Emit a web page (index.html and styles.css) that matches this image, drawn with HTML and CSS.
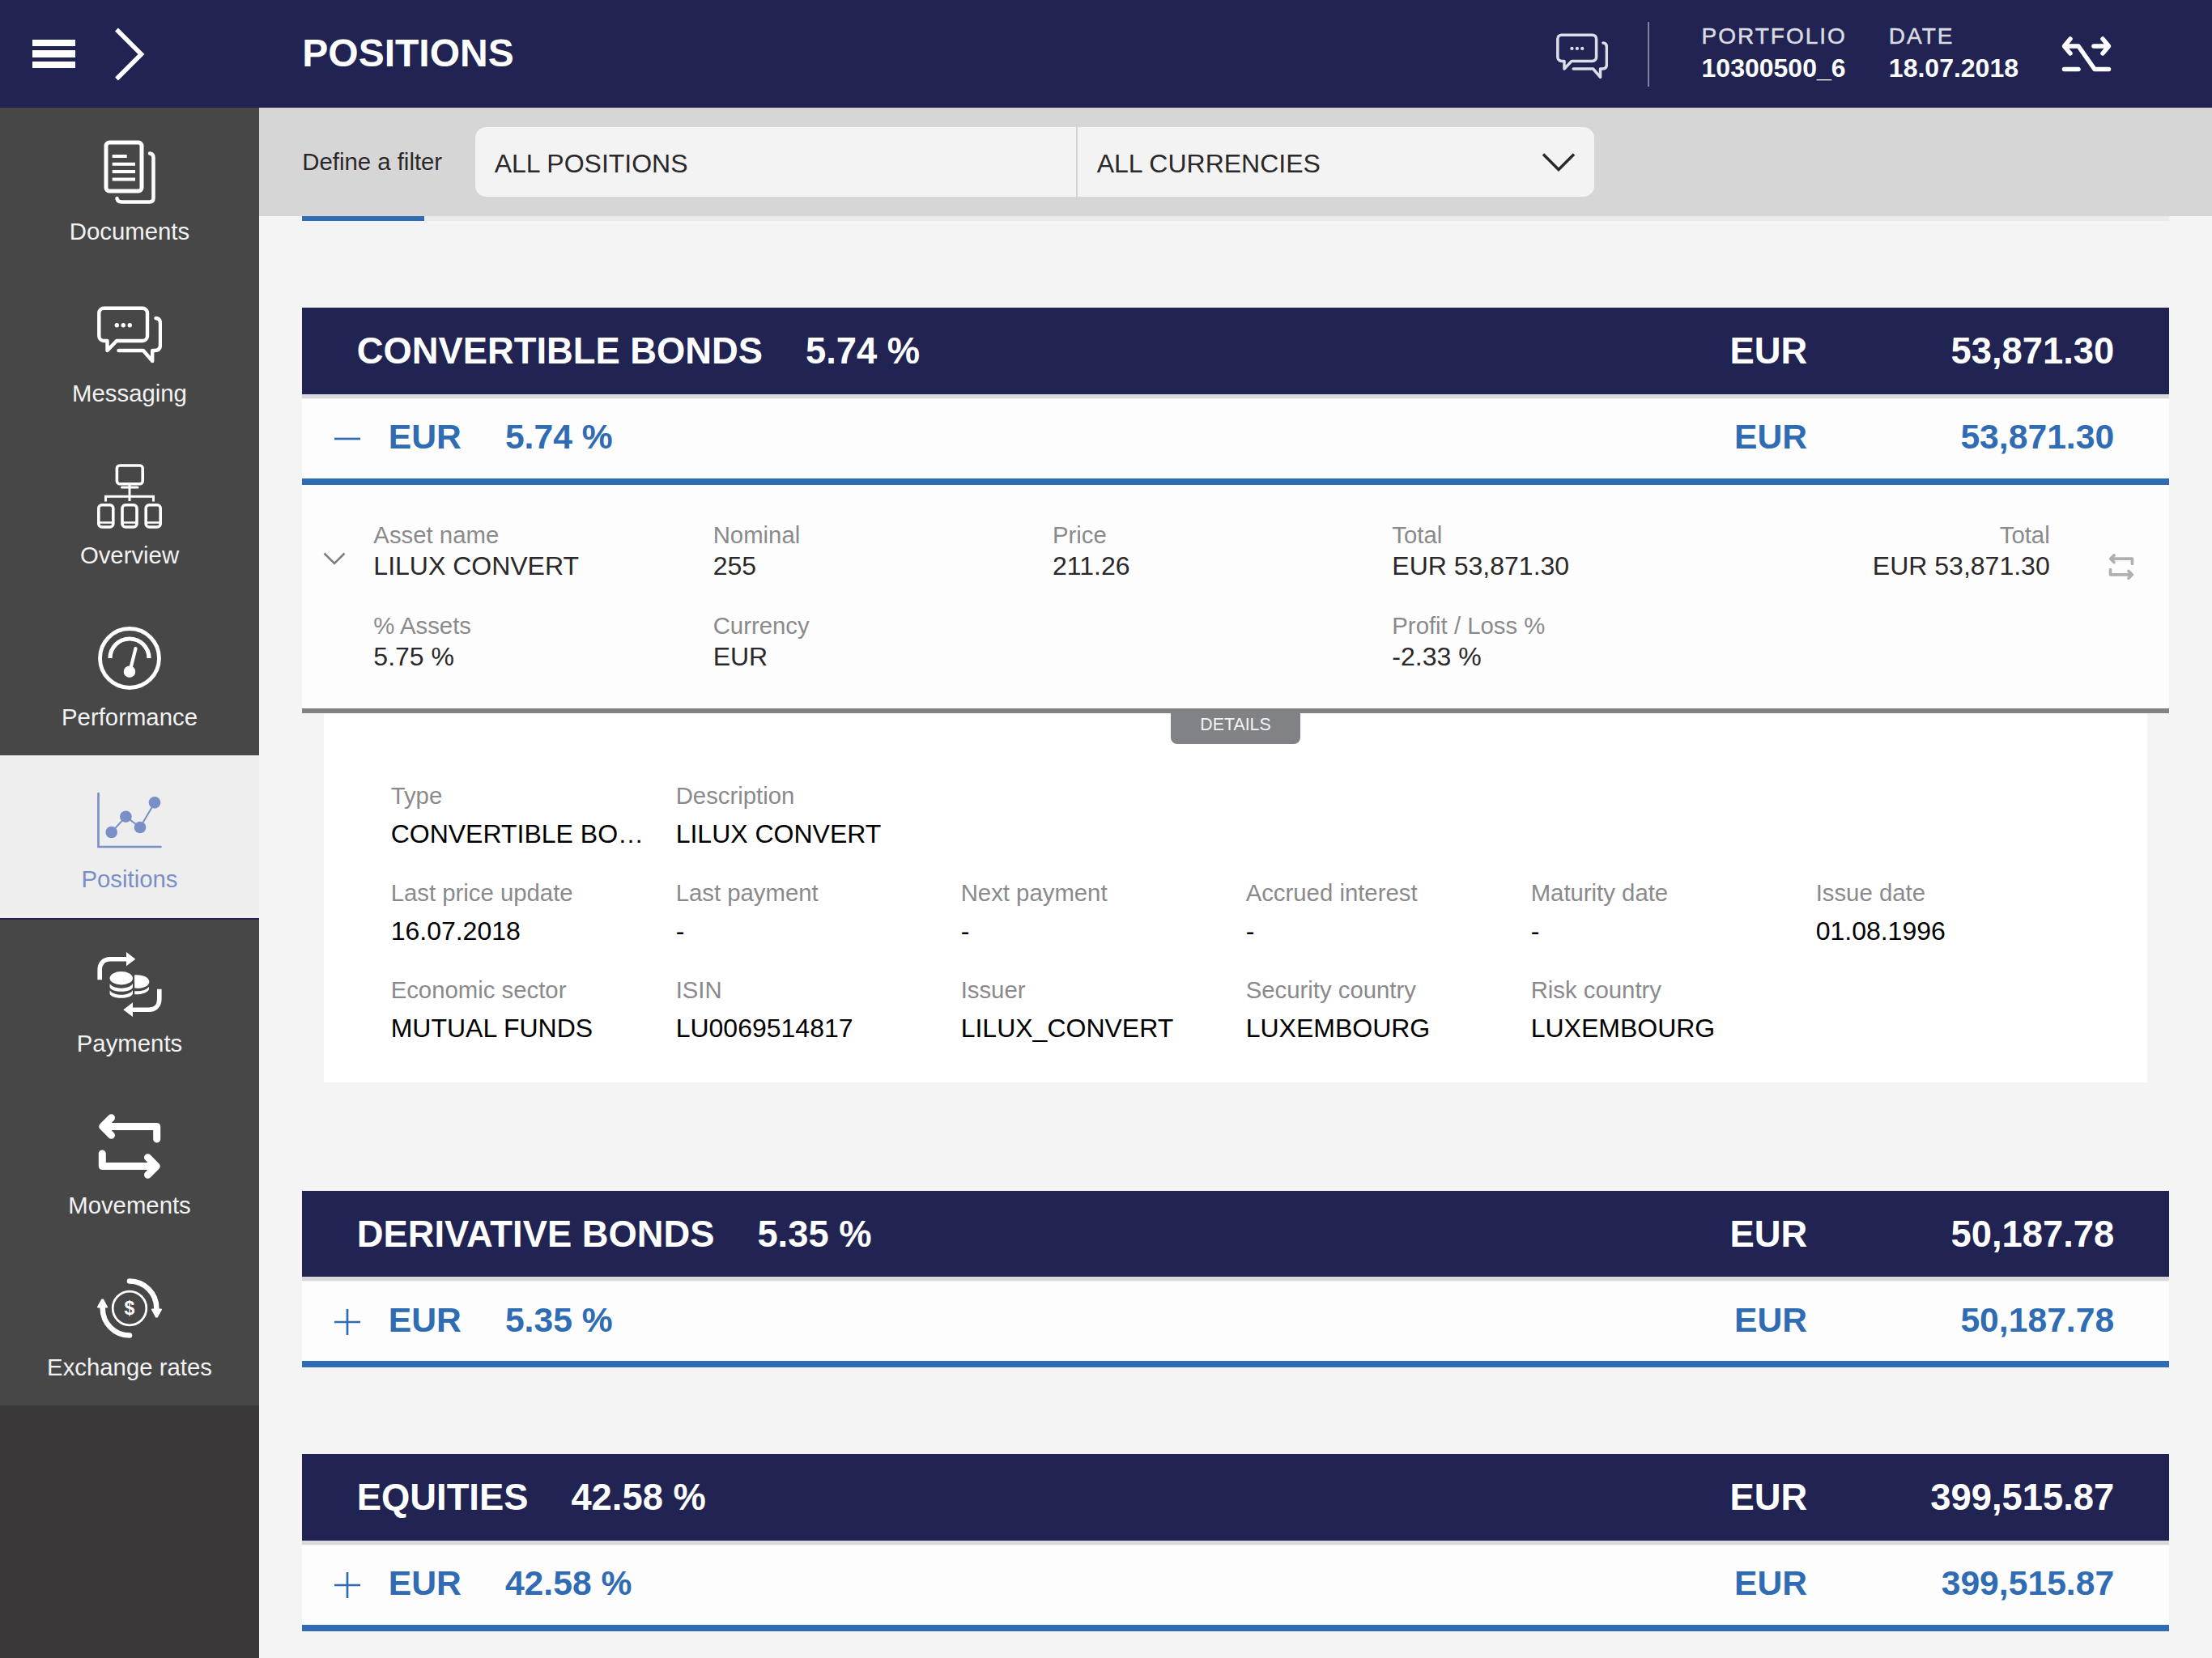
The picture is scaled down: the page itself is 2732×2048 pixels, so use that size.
FILE: index.html
```html
<!DOCTYPE html>
<html lang="en">
<head>
    <meta charset="UTF-8">
    <meta name="viewport" content="width=device-width, initial-scale=1.0">
    <title>Positions</title>
    <link rel="stylesheet" href="styles.css">
</head>
<body>
    <!-- shared icons -->
    <svg class="icon-defs" width="0" height="0">
        <symbol id="icon-chat" viewBox="0 0 80 80">
            <g fill="none" stroke="currentColor" stroke-width="4.4" stroke-linecap="round" stroke-linejoin="round">
                <path d="M8.3 7.7H56a6 6 0 0 1 6 6V42a6 6 0 0 1-6 6H24L12.5 60V48H8.3a6 6 0 0 1-6-6V13.7a6 6 0 0 1 6-6z"/>
                <path d="M72.5 20q5.5.5 5.5 6.5V53q0 7-7 7H68.2V73L57 60H26.5"/>
            </g>
            <g fill="currentColor">
                <circle cx="24.3" cy="28.7" r="2.7"/>
                <circle cx="32.3" cy="28.7" r="2.7"/>
                <circle cx="40.3" cy="28.7" r="2.7"/>
            </g>
        </symbol>
        <symbol id="icon-movements" viewBox="0 0 80 80">
            <g fill="none" stroke="currentColor" stroke-width="9" stroke-linecap="round" stroke-linejoin="round">
                <path d="M17.5 4.7L6.7 15.4L17.5 26.3M8 15.4H73.7V31"/>
                <path d="M62.5 75.3L73.3 64.6L62.5 53.7M72 64.6H6.3V49"/>
            </g>
            <path fill="currentColor" d="M6.7 15.4L17.5 4.7V26.3zM73.3 64.6L62.5 75.3V53.7z"/>
        </symbol>
    </svg>

    <header class="header">
        <div class="header-nav">
            <div class="burger"><span></span><span></span><span></span></div>
            <svg class="forward" viewBox="0 0 40 66" fill="none" stroke="currentColor" stroke-width="5.5"><path d="M3 2.5L33.5 33L3 63.5"/></svg>
        </div>
        <h1>POSITIONS</h1>
        <div class="header-info">
            <svg class="header-chat"><use href="#icon-chat"/></svg>
            <div class="header-divider"></div>
            <div class="info-item">
                <div class="info-label">PORTFOLIO</div>
                <div class="info-value">10300500_6</div>
            </div>
            <div class="info-item">
                <div class="info-label">DATE</div>
                <div class="info-value">18.07.2018</div>
            </div>
            <svg class="header-switch" viewBox="0 0 64 48" fill="none" stroke="currentColor" stroke-width="5.5" stroke-linecap="round" stroke-linejoin="round">
                <path d="M12 5L4.5 14L12 23M5 14H22L42 42.5H59.5"/>
                <path d="M52 5L59.5 14L52 23M59 14H41"/>
                <path d="M4.5 42.5H22"/>
            </svg>
        </div>
    </header>

    <div class="page">
        <nav class="sidebar">
            <a class="menu-item">
                <svg viewBox="0 0 80 80" fill="none" stroke="currentColor" stroke-width="5">
                    <rect x="11" y="3" width="44" height="60" rx="4"/>
                    <path stroke-width="4" d="M18.7 20H36.7M18.7 29.7H47M18.7 39H47M18.7 48.5H47"/>
                    <path stroke-width="4.5" stroke-linecap="round" d="M65 16.6q4.5.5 4.5 5.4V71.5q0 5-5 5H30.5q-5.5 0-6-4.5"/>
                </svg>
                <span>Documents</span>
            </a>
            <a class="menu-item">
                <svg><use href="#icon-chat"/></svg>
                <span>Messaging</span>
            </a>
            <a class="menu-item">
                <svg viewBox="0 0 80 80" fill="none" stroke="currentColor" stroke-width="3.6">
                    <rect x="24.4" y="2" width="31.8" height="22.7" rx="3.5"/>
                    <path stroke-width="3" d="M40 25V46M10.5 46.5V40.3H69.5V46.5"/>
                    <path stroke-width="3" stroke-linecap="round" d="M30.5 29H50"/>
                    <rect x="1.8" y="50.8" width="18" height="27.2" rx="4"/>
                    <rect x="31" y="50.8" width="18" height="27.2" rx="4"/>
                    <rect x="60.2" y="50.8" width="18" height="27.2" rx="4"/>
                    <path stroke-width="2.5" d="M2 72.5H20M31 72.5H49M60 72.5H78"/>
                </svg>
                <span>Overview</span>
            </a>
            <a class="menu-item">
                <svg viewBox="0 0 80 80" fill="none" stroke="currentColor" stroke-width="4.8">
                    <circle cx="40" cy="40" r="36.5"/>
                    <path stroke-width="5.2" d="M16 40A24 24 0 0 1 64 40"/>
                    <path stroke-width="4.2" stroke-linecap="round" d="M47.5 28L40.5 56"/>
                    <circle cx="40" cy="56.7" r="7.2" fill="currentColor" stroke="none"/>
                </svg>
                <span>Performance</span>
            </a>
            <a class="menu-item active">
                <svg viewBox="0 0 80 80" fill="none" stroke="currentColor" stroke-width="2.7">
                    <path stroke-linecap="round" d="M1.5 7V73H78.5"/>
                    <path stroke-width="2" d="M17.7 55L35.4 35.7L53 49L71 18.4"/>
                    <g fill="currentColor" stroke="none">
                        <circle cx="17.7" cy="55" r="7.3"/>
                        <circle cx="35.4" cy="35.7" r="7.3"/>
                        <circle cx="53" cy="49" r="7.3"/>
                        <circle cx="71" cy="18.4" r="7.3"/>
                    </g>
                </svg>
                <span>Positions</span>
            </a>
            <a class="menu-item">
                <svg viewBox="0 0 80 80" fill="currentColor">
                    <g fill="none" stroke="currentColor" stroke-width="5.6">
                        <path d="M3.2 34.3V22C3.2 14 8 8.7 16 8.7H37"/>
                        <path d="M76.8 45.7V58C76.8 66 72 71.3 64 71.3H43"/>
                    </g>
                    <path d="M36 0L47.3 8.7L36 17.3zM44 62.3L32.3 71.3L44 80z"/>
                    <ellipse cx="29.8" cy="32.3" rx="14.2" ry="8.2"/>
                    <path d="M15.6 39C20 46.500 39.5 46.5 44 39V43.500C42 50.5 17.5 50.5 15.6 43.5z"/>
                    <path d="M15.6 47.2C20 54.500 39.5 54.5 44 47.2V51.500C42 58.5 17.5 58.5 15.6 51.5z"/>
                    <path d="M46 28.5C57 27.5 64.3 32 64.3 36.7C64.3 42 56 45.5 46.2 44.6z"/>
                    <path d="M46.2 48.3C55 48.8 61.5 46.5 64 42.7V46C62 50.5 54 52.8 46.2 52.2z"/>
                </svg>
                <span>Payments</span>
            </a>
            <a class="menu-item">
                <svg><use href="#icon-movements"/></svg>
                <span>Movements</span>
            </a>
            <a class="menu-item">
                <svg viewBox="0 0 80 80" fill="none" stroke="currentColor">
                    <circle cx="40" cy="40" r="20.8" stroke-width="2.8"/>
                    <g stroke-width="6.5">
                        <path stroke-linecap="round" d="M40 6.5A33.3 33.5 0 0 1 73.3 40"/>
                        <path stroke-linecap="round" d="M40 73.5A33.3 33.5 0 0 1 6.7 40"/>
                    </g>
                    <path fill="currentColor" stroke-width="2" stroke-linejoin="round" d="M68 41.500H79L74 50.5H72.8zM12 38.5H1L6 29.5H7.2z"/>
                    <text class="dollar" x="40" y="47.5">$</text>
                </svg>
                <span>Exchange rates</span>
            </a>
        </nav>

        <main class="content">
            <div class="filter-bar">
                <label>Define a filter</label>
                <div class="filter-box">
                    <div class="filter-field filter-positions">ALL POSITIONS</div>
                    <div class="filter-field filter-currencies">
                        ALL CURRENCIES
                        <svg class="filter-arrow" viewBox="0 0 42 26" fill="none" stroke="currentColor" stroke-width="3.5"><path d="M2 2.5L21 21.5L40 2.5"/></svg>
                    </div>
                </div>
            </div>

            <div class="positions">
                <div class="progress"><div class="progress-bar"></div></div>

                <section class="group open">
                    <div class="group-header">
                        <span>CONVERTIBLE BONDS</span>
                        <span>5.74 %</span>
                        <span class="currency">EUR</span>
                        <span class="amount">53,871.30</span>
                    </div>
                    <div class="currency-row">
                        <svg class="toggle" viewBox="0 0 32 32" stroke="currentColor" stroke-width="2.7"><path d="M0 16H32"/></svg>
                        <span>EUR</span>
                        <span>5.74 %</span>
                        <span class="currency">EUR</span>
                        <span class="amount">53,871.30</span>
                    </div>
                    <div class="asset">
                        <svg class="asset-arrow" viewBox="0 0 28 16" fill="none" stroke="currentColor" stroke-width="2.5"><path d="M1.5 1.5L14 14L26.5 1.5"/></svg>
                        <div class="asset-grid">
                            <div class="field"><div class="label">Asset name</div><div class="value">LILUX CONVERT</div></div>
                            <div class="field"><div class="label">Nominal</div><div class="value">255</div></div>
                            <div class="field"><div class="label">Price</div><div class="value">211.26</div></div>
                            <div class="field"><div class="label">Total</div><div class="value">EUR 53,871.30</div></div>
                            <div class="field"><div class="label">% Assets</div><div class="value">5.75 %</div></div>
                            <div class="field"><div class="label">Currency</div><div class="value">EUR</div></div>
                            <div class="field"></div>
                            <div class="field"><div class="label">Profit / Loss %</div><div class="value">-2.33 %</div></div>
                        </div>
                        <div class="field asset-total"><div class="label">Total</div><div class="value">EUR 53,871.30</div></div>
                        <svg class="asset-movements"><use href="#icon-movements"/></svg>
                    </div>
                    <div class="details">
                        <div class="details-tab">DETAILS</div>
                        <div class="details-grid">
                            <div class="field"><div class="label">Type</div><div class="value">CONVERTIBLE BO…</div></div>
                            <div class="field wide"><div class="label">Description</div><div class="value">LILUX CONVERT</div></div>
                            <div class="field"><div class="label">Last price update</div><div class="value">16.07.2018</div></div>
                            <div class="field"><div class="label">Last payment</div><div class="value">-</div></div>
                            <div class="field"><div class="label">Next payment</div><div class="value">-</div></div>
                            <div class="field"><div class="label">Accrued interest</div><div class="value">-</div></div>
                            <div class="field"><div class="label">Maturity date</div><div class="value">-</div></div>
                            <div class="field"><div class="label">Issue date</div><div class="value">01.08.1996</div></div>
                            <div class="field"><div class="label">Economic sector</div><div class="value">MUTUAL FUNDS</div></div>
                            <div class="field"><div class="label">ISIN</div><div class="value">LU0069514817</div></div>
                            <div class="field"><div class="label">Issuer</div><div class="value">LILUX_CONVERT</div></div>
                            <div class="field"><div class="label">Security country</div><div class="value">LUXEMBOURG</div></div>
                            <div class="field"><div class="label">Risk country</div><div class="value">LUXEMBOURG</div></div>
                        </div>
                    </div>
                </section>

                <section class="group">
                    <div class="group-header">
                        <span>DERIVATIVE BONDS</span>
                        <span>5.35 %</span>
                        <span class="currency">EUR</span>
                        <span class="amount">50,187.78</span>
                    </div>
                    <div class="currency-row">
                        <svg class="toggle" viewBox="0 0 32 32" stroke="currentColor" stroke-width="2.7"><path d="M0 16H32M16 0V32"/></svg>
                        <span>EUR</span>
                        <span>5.35 %</span>
                        <span class="currency">EUR</span>
                        <span class="amount">50,187.78</span>
                    </div>
                </section>

                <section class="group">
                    <div class="group-header">
                        <span>EQUITIES</span>
                        <span>42.58 %</span>
                        <span class="currency">EUR</span>
                        <span class="amount">399,515.87</span>
                    </div>
                    <div class="currency-row">
                        <svg class="toggle" viewBox="0 0 32 32" stroke="currentColor" stroke-width="2.7"><path d="M0 16H32M16 0V32"/></svg>
                        <span>EUR</span>
                        <span>42.58 %</span>
                        <span class="currency">EUR</span>
                        <span class="amount">399,515.87</span>
                    </div>
                </section>
            </div>
        </main>
    </div>
</body>
</html>
```

FILE: styles.css
```css
* {
    box-sizing: border-box;
}
body {
    margin: 0;
    height: 2048px;
    overflow: hidden;
    display: flex;
    flex-direction: column;
    font-family: "Liberation Sans", Arial, Helvetica, sans-serif;
    background: #f4f4f4;
    color: #2b2829;
}
svg {
    display: block;
    flex: none;
}
.icon-defs {
    position: absolute;
}

/* header */
.header {
    display: flex;
    align-items: center;
    flex: none;
    height: 133.33px;
    background: #212453;
    color: white;
}
.header-nav {
    display: flex;
    align-items: center;
    width: 373.33px;
    padding-left: 40px;
}
.burger {
    display: flex;
    flex-direction: column;
    gap: 5px;
    width: 53.33px;
    margin-right: 48px;
}
.burger span {
    height: 8.5px;
    background: white;
}
.forward {
    width: 40px;
    height: 66px;
}
h1 {
    margin: 0 0 1px;
    font-size: 48px;
    line-height: 56px;
}
.header-info {
    display: flex;
    align-items: center;
    margin-left: auto;
    padding-right: 123px;
}
.header-chat {
    width: 64px;
    height: 64px;
    margin: 5px 49px 0 0;
    color: #dddde8;
}
.header-divider {
    width: 2px;
    height: 80px;
    margin-right: 65px;
    background: #80829f;
}
.info-item {
    margin: 0 52px 2px 0;
}
.info-label {
    font-size: 28px;
    line-height: 36px;
    letter-spacing: 2px;
    color: #dcdce0;
    -webkit-text-stroke: 0.5px #dcdce0;
}
.info-value {
    font-size: 32px;
    line-height: 42px;
    font-weight: bold;
}
.header-switch {
    width: 64px;
    height: 48px;
}

/* sidebar */
.page {
    display: flex;
    flex: 1;
    min-height: 0;
}
.sidebar {
    flex: none;
    width: 320px;
    background: #3b3839;
}
.menu-item {
    display: flex;
    flex-direction: column;
    align-items: center;
    gap: 16px;
    height: 200px;
    padding-top: 40px;
    background: #474747;
    color: white;
    font-size: 29.33px;
    line-height: 33.33px;
}
.menu-item svg {
    width: 80px;
    height: 80px;
}
.menu-item span {
    color: #f2f2f2;
}
.menu-item.active {
    height: 202.67px;
    background: #eee;
    border-bottom: 2.67px solid #212453;
    color: #7b8fc7;
}
.menu-item.active span {
    color: #7b8fc7;
}
.dollar {
    font-size: 23px;
    font-weight: bold;
    text-anchor: middle;
    fill: currentColor;
    stroke: none;
}

/* filter */
.content {
    flex: 1;
    min-width: 0;
}
.filter-bar {
    display: flex;
    align-items: center;
    height: 133.33px;
    padding-left: 53.33px;
    background: #d6d6d6;
    font-size: 29.33px;
}
.filter-bar label {
    width: 213.33px;
}
.filter-box {
    display: flex;
    height: 85.33px;
    border-radius: 13.33px;
    background: #f3f3f3;
    font-size: 32px;
}
.filter-field {
    display: flex;
    align-items: center;
    justify-content: space-between;
    padding: 5px 23px 0 24px;
}
.filter-positions {
    width: 744px;
    border-right: 2px solid #d6d6d6;
}
.filter-currencies {
    width: 638px;
}
.filter-arrow {
    width: 42px;
    height: 26px;
    margin-bottom: 2px;
}

/* positions */
.positions {
    padding: 0 53.33px;
}
.progress {
    height: 6.67px;
    margin-bottom: 106.67px;
    background: #ebebeb;
}
.progress-bar {
    width: 150.67px;
    height: 100%;
    background: #2f6cb3;
}
.group {
    margin-bottom: 106.67px;
}
.group.open {
    margin-bottom: 133.33px;
}
.group-header {
    display: flex;
    align-items: center;
    gap: 53px;
    height: 106.67px;
    padding: 2px 67.5px 0;
    background: #212453;
    color: white;
    font-size: 45.33px;
    font-weight: bold;
}
.currency-row {
    display: flex;
    align-items: center;
    gap: 54px;
    height: 112px;
    padding: 2px 67.5px 0 40px;
    background: #fdfdfd;
    border-bottom: 8px solid #2f6cb3;
    box-shadow: inset 0 5.33px #d9d8dc;
    color: #2f6cb3;
    font-size: 42.67px;
    font-weight: bold;
}
.toggle {
    width: 32px;
    height: 32px;
    margin: 5px -19.5px 0 0;
}
.currency {
    margin-left: auto;
}
.amount {
    width: 379px;
    text-align: right;
}
.group-header .amount {
    margin-left: -53px;
}
.currency-row .amount {
    margin-left: -54px;
}

/* asset */
.label {
    font-size: 29.33px;
    color: #8a8a8c;
}
.value {
    font-size: 32px;
    overflow: hidden;
    text-overflow: ellipsis;
    white-space: nowrap;
}
.asset {
    display: flex;
    height: 282.67px;
    padding: 43px 43px 0 26px;
    background: #fdfdfd;
    border-bottom: 6px solid #808285;
}
.asset .label {
    line-height: 37.33px;
}
.asset .value {
    line-height: 40.67px;
}
.asset-arrow {
    width: 28px;
    height: 16px;
    margin: 40px 34px 0 0;
    color: #7d7d7f;
}
.asset-grid {
    display: grid;
    grid-template-columns: repeat(4, 419.33px);
    grid-auto-rows: 78px;
    row-gap: 34px;
}
.asset-total {
    flex: 1;
    text-align: right;
}
.asset-movements {
    width: 32px;
    height: 32px;
    margin: 42px 0 0 72px;
    color: #b0b0b0;
}

/* details */
.details {
    height: 456px;
    margin: 0 26.67px;
    background: white;
}
.details-tab {
    width: 160px;
    height: 37.33px;
    margin: 0 auto 44.67px;
    border-radius: 0 0 8px 8px;
    background: #808285;
    color: #f4f4f4;
    font-size: 21.33px;
    line-height: 29px;
    text-align: center;
}
.details-grid {
    display: grid;
    grid-template-columns: repeat(6, 352px);
    row-gap: 26px;
    padding-left: 82.67px;
}
.details .field {
    padding-right: 26.67px;
}
.details .wide {
    grid-column: span 5;
}
.details .label {
    line-height: 40px;
}
.details .value {
    line-height: 54px;
    color: black;
}
```
